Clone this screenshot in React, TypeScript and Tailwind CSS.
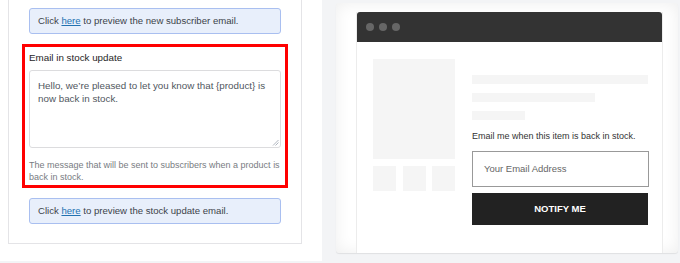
const font = { fontFamily: "'Liberation Sans', Arial, sans-serif" };

const message = "Hello, we’re pleased to let you know that {product} is now back in stock.";

function Notice({ text }: { text: string }) {
  return (
    <div className="mx-[7px] flex h-[26px] items-center rounded-[3px] border border-[#a9bff0] bg-[#e8effb] px-[8px] text-[9.6px] text-[#3c434a]">
      <span>
        Click <span className="text-[#2271b1] underline">here</span> {text}
      </span>
    </div>
  );
}

function SettingsCard() {
  return (
    <div className="h-[261px] w-[322px] bg-white pl-[8px] pr-[20px]">
      <div className="h-[244px] border-x border-b border-[#e4e4e7] px-[13px] pt-[8px]">
        <Notice text="to preview the new subscriber email." />
        <div className="mt-[10px] h-[144px] border-[3px] border-[#ff0000] px-[4px] pt-[5px]">
          <div className="text-[9.8px] leading-[12px] text-[#1e1e1e]">Email in stock update</div>
          <div className="relative mt-[6px] h-[78px] rounded-[3px] border border-[#dcdcde] px-[8px] pt-[8px] text-[9.8px] leading-[13px] text-[#50575e]">
            <p>{message}</p>
            <svg className="absolute bottom-[1px] right-[1px]" width="7" height="7" viewBox="0 0 7 7">
              <path d="M1 6.5 L6.5 1 M3.5 6.5 L6.5 3.5" stroke="#9ca3af" strokeWidth="0.8" />
            </svg>
          </div>
          <div className="mt-[11px] text-[9px] leading-[12px] text-[#787c82]">
            The message that will be sent to subscribers when a product is back in stock.
          </div>
        </div>
        <div className="mt-[10px]">
          <Notice text="to preview the stock update email." />
        </div>
      </div>
    </div>
  );
}

function Preview() {
  return (
    <div className="mt-[3px] h-[250px] w-[342px] overflow-hidden rounded-[3px] bg-white pl-[20px] pr-[15px] pt-[9px] shadow-[inset_0_0_16px_rgba(0,0,0,0.07),0_1px_1px_rgba(0,0,0,0.08)]">
      <div className="h-full border-x border-[#ececec] bg-white">
        <div className="flex h-[30px] items-center gap-[5px] rounded-t-[3px] bg-[#333333] pl-[9px]">
          <span className="h-[8px] w-[8px] rounded-full bg-[#666666]" />
          <span className="h-[8px] w-[8px] rounded-full bg-[#666666]" />
          <span className="h-[8px] w-[8px] rounded-full bg-[#666666]" />
        </div>
        <div className="flex gap-[17px] pl-[16px] pt-[17px]">
          <div className="w-[82px]">
            <div className="h-[100px] bg-[#f5f5f5]" />
            <div className="mt-[7px] flex justify-between">
              <div className="h-[25px] w-[23px] bg-[#f5f5f5]" />
              <div className="h-[25px] w-[23px] bg-[#f5f5f5]" />
              <div className="h-[25px] w-[23px] bg-[#f5f5f5]" />
            </div>
          </div>
          <div className="w-[177px] pt-[16px]">
            <div className="h-[9px] w-[176px] bg-[#f5f5f5]" />
            <div className="mt-[9px] h-[9px] w-[123px] bg-[#f5f5f5]" />
            <div className="mt-[9px] h-[9px] w-[53px] bg-[#f5f5f5]" />
            <div className="mt-[10px] text-[9px] leading-[12px] text-[#333333]">
              Email me when this item is back in stock.
            </div>
            <div className="mt-[9px] flex h-[36px] items-center border border-[#999999] pl-[11px] text-[9.5px] text-[#666666]">
              Your Email Address
            </div>
            <div className="mt-[6px] flex h-[32px] w-[176px] items-center justify-center bg-[#222222] text-[9.5px] font-bold text-white">
              NOTIFY ME
            </div>
          </div>
        </div>
      </div>
    </div>
  );
}

export default function App() {
  return (
    <div className="flex h-[263px] w-[680px] gap-[14px] bg-[#f3f4f6]" style={font}>
      <SettingsCard />
      <Preview />
    </div>
  );
}
